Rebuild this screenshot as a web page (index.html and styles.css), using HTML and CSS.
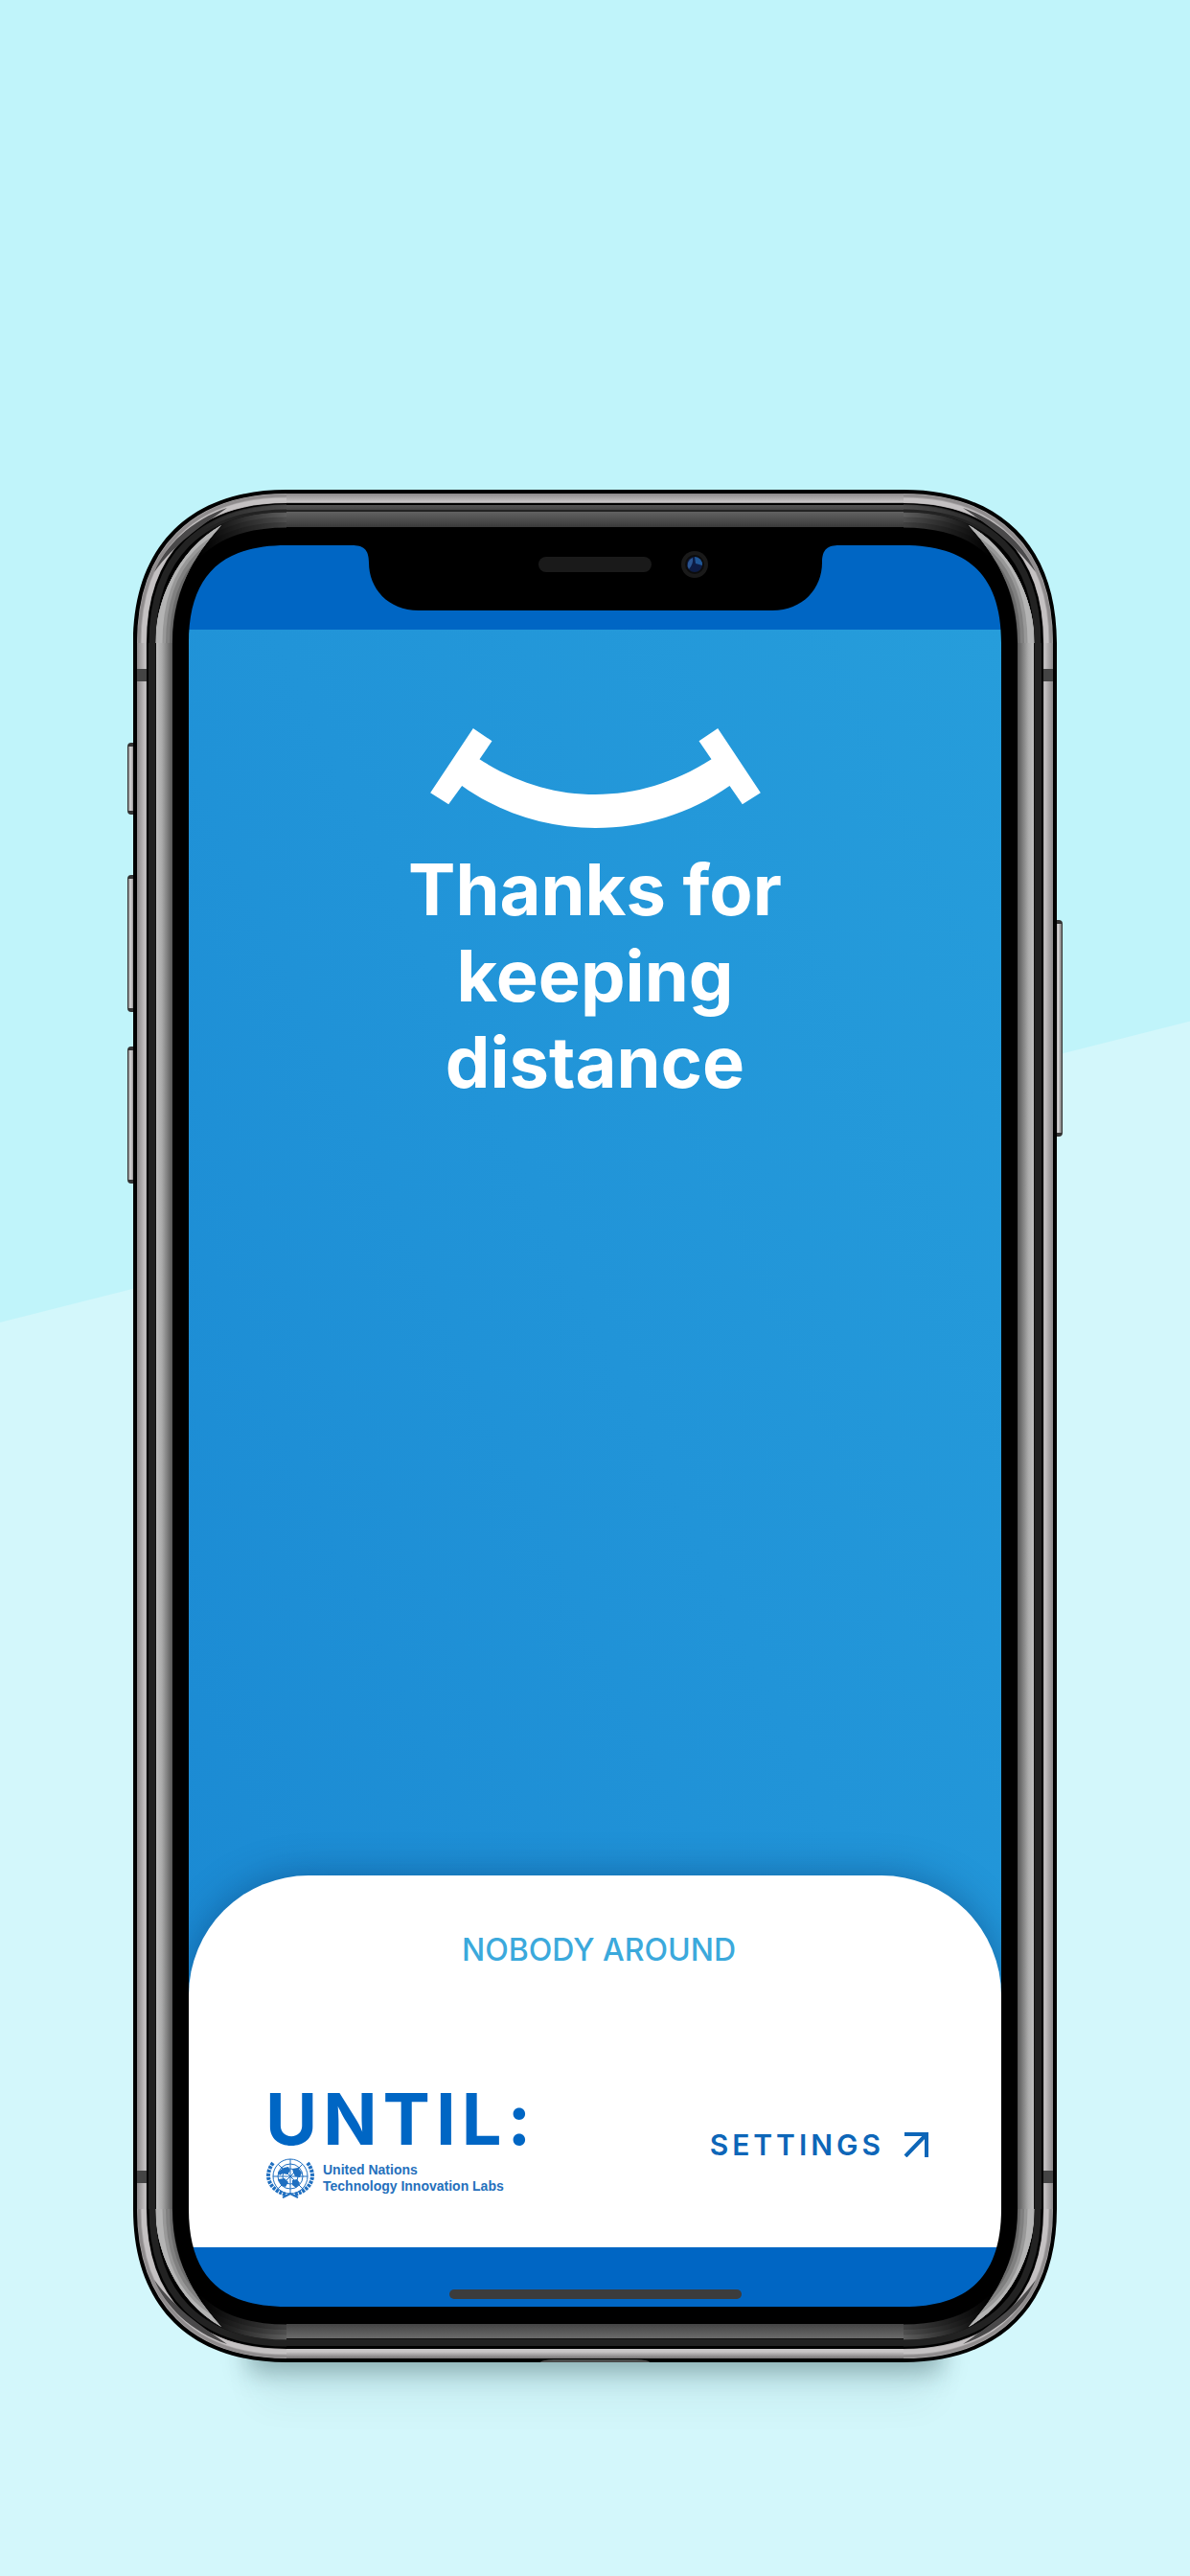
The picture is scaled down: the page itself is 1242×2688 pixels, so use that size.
FILE: index.html
```html
<!DOCTYPE html>
<html lang="en">
<head>
<meta charset="utf-8">
<meta name="viewport" content="width=device-width, initial-scale=1">
<title>UNTIL – keeping distance</title>
<link rel="stylesheet" href="styles.css">
</head>
<body>
<svg class="defs" aria-hidden="true">
  <defs>
    <linearGradient id="fade" x1="70" y1="0" x2="160" y2="0" gradientUnits="userSpaceOnUse">
      <stop offset="0" stop-color="#000"/>
      <stop offset="1" stop-color="#fff"/>
    </linearGradient>
    <mask id="fade-mask" maskUnits="userSpaceOnUse" x="0" y="0" width="160" height="160">
      <rect width="160" height="160" fill="url(#fade)"/>
    </mask>
    <clipPath id="gleam"><path d="M23 161V160C23 120 44 64 92 37C72 60 41 97 41 160V161Z"/></clipPath>
    <symbol id="corner" viewBox="0 0 160 160">
      <path d="M0 160C0 59 59 0 160 0V58C91 58 58 91 58 160Z"/>
      <g fill="none">
        <path stroke="#a8a5a6" stroke-width="10" d="M9 160C9 64 64 9 160 9"/>
        <path stroke="#8f8c8d" stroke-width="3" d="M6 160C6 63 63 6 160 6"/>
        <path stroke="#c4c1c2" stroke-width="5" d="M11 160C11 65 65 11 160 11"/>
        <path stroke="#222" stroke-width="7" d="M20 160C20 70 70 20 160 20"/>
        <g mask="url(#fade-mask)">
          <path class="rim" stroke="#4c4c4c" stroke-width="5" d="M18 160C18 69 69 18 160 18"/>
          <path stroke="#404040" stroke-width="15" d="M32 160C32 77 77 32 160 32"/>
          <path stroke="#4e4e4e" stroke-width="10" d="M29 160C29 75 75 29 160 29"/>
          <path stroke="#5e5e5e" stroke-width="5" d="M26 160C26 74 74 26 160 26"/>
        </g>
        <g clip-path="url(#gleam)">
          <path stroke="#555" stroke-width="24" d="M36 160C36 79 79 36 160 36"/>
          <path stroke="#6a6a6a" stroke-width="17" d="M32 160C32 77 77 32 160 32"/>
          <path stroke="#808080" stroke-width="14" d="M31 160C31 76 76 31 160 31"/>
          <path stroke="#989898" stroke-width="10" d="M29 160C29 75 75 29 160 29"/>
          <path stroke="#b4b4b4" stroke-width="7" d="M27 160C27 74 74 27 160 27"/>
        </g>
      </g>
      <path fill="#4a494a" d="M22 86C34 58 60 32 98 19C68 40 44 56 22 86Z"/>
    </symbol>
  </defs>
</svg>

<main class="phone">
  <div class="keys keys-left"><i class="key key-mute"></i><i class="key key-volume"></i><i class="key key-volume"></i></div>
  <div class="keys keys-right"><i class="key key-power"></i></div>

  <div class="edge-top"></div>
  <div class="edge-bottom"><i class="port"></i></div>
  <div class="edge-left"></div>
  <div class="edge-right"></div>

  <div class="screen">
    <header class="status">
      <svg class="notch" viewBox="0 0 509 68" aria-hidden="true">
        <path d="M0 0C12 0 18 4 18 18C18 45 38 68 70 68H439C471 68 491 45 491 18C491 4 497 0 509 0Z"/>
        <rect x="195" y="12" width="118" height="16" rx="8" fill="#1a1a1a"/>
        <circle cx="358" cy="20" r="14" fill="#1a1a1a"/>
        <circle cx="358" cy="20" r="10" fill="#0c0c0c"/>
        <circle cx="358" cy="20" r="8" fill="#0d1c44"/>
        <path d="M358 12a8 8 0 0 1 8 9l-7-2z" fill="#1f5797"/>
        <path d="M356 13a8 8 0 0 0-4 12q5-6 4-12z" fill="#2b5590"/>
      </svg>
    </header>

    <section class="hero">
      <svg class="smile" viewBox="148 90 1034 312" aria-hidden="true">
        <path d="M282 90L341 130L302 187C420 262 540 297 665 297C790 297 910 262 1028 187L989 130L1048 90L1182 292L1125 328L1085 270C960 358 815 402 665 402C515 402 370 358 247 270L205 328L148 292Z"/>
      </svg>
      <h1 class="title">Thanks for<br>keeping<br>distance</h1>
    </section>

    <section class="card">
      <p class="nearby">NOBODY AROUND</p>
      <div class="bar">
        <div class="brand">
          <div class="wordmark">UNTIL:</div>
          <div class="org">
            <svg class="emblem" viewBox="0 0 52 44" aria-hidden="true">
              <g fill="none" stroke="#1f6fc0">
                <circle cx="26" cy="20" r="18"/>
                <circle cx="26" cy="20" r="13"/>
                <circle cx="26" cy="20" r="8"/>
                <path d="M26 2V38M8 20H44M13 7L39 33M39 7L13 33"/>
                <path stroke-width="4" stroke-dasharray="3 1" d="M8 6C0 16 0 32 21 39"/>
                <path stroke-width="4" stroke-dasharray="3 1" d="M44 6C52 16 52 32 31 39"/>
                <path stroke-width="2" d="M18 42L26 38L34 42"/>
              </g>
              <path fill="#1f6fc0" d="M19 11l5-1 2 4-3 4-5-1-3 2-2-3 3-3zM28 12l6-1 4 5-2 5-5-1-2-4zM13 23l7-1 4 4-3 5-4-1zM28 24l5-1 3 4-4 5-4-3z"/>
            </svg>
            <p class="org-name">United Nations<br>Technology Innovation Labs</p>
          </div>
        </div>
        <button class="settings" type="button">SETTINGS
          <svg class="arrow" viewBox="0 0 26 26" aria-hidden="true"><path d="M1 2H24V26M24 2L2 25"/></svg>
        </button>
      </div>
    </section>

    <footer class="home"><i class="home-bar"></i></footer>
  </div>

  <svg class="corner corner-tl" aria-hidden="true"><use href="#corner"/></svg>
  <svg class="corner corner-tr" aria-hidden="true"><use href="#corner"/></svg>
  <svg class="corner corner-bl" aria-hidden="true"><use href="#corner"/></svg>
  <svg class="corner corner-br" aria-hidden="true"><use href="#corner"/></svg>
</main>
</body>
</html>
```
FILE: styles.css
```css
* { box-sizing: border-box; }

body {
  margin: 0;
  min-height: 100vh;
  display: flex;
  flex-direction: column;
  padding: 511px 133px 223px;
  background: linear-gradient(165.8deg, #c0f4fa calc(50% - 118px), #d3f7fb calc(50% - 117px));
  font-family: Inter, "Liberation Sans", sans-serif;
}

.defs { width: 0; height: 0; position: absolute; }

/* device frame: side keys in the outer columns, corners and edges inside */
.phone {
  flex: 1;
  display: grid;
  grid-template-columns: 6px 160px minmax(0, 1fr) 160px 6px;
  grid-template-rows: 160px 1fr 160px;
}

.corner { width: 160px; height: 160px; z-index: 2; }
.corner-tl { grid-area: 1 / 2; }
.corner-tr { grid-area: 1 / 4; transform: scaleX(-1); }
.corner-bl { grid-area: 3 / 2; transform: scaleY(-1); --rim: 0; }
.corner-br { grid-area: 3 / 4; transform: scale(-1); --rim: 0; }
.rim { opacity: var(--rim, 1); }

.edge-top {
  grid-area: 1 / 3;
  height: 58px;
  background: linear-gradient(#000 4px, #8c898a 4px, #c8c5c6 13px, #777 14px, #000 14px, #000 16px, #555 16px, #444 21px, #222 21px, #222 23px, #626262 23px, #3a3a3a 39px, #000 39px);
}
.edge-bottom {
  grid-area: 3 / 3;
  align-self: end;
  height: 58px;
  display: flex;
  justify-content: center;
  align-items: end;
  background: linear-gradient(to top, #000 4px, #777475 4px, #c8c5c6 11px, #c8c5c6 14px, #000 14px, #000 17px, #222 17px, #222 24px, #111 24px, #111 25px, #6a6a6a 25px, #444 40px, #000 40px);
  box-shadow: 0 -30px 24px 40px rgba(20, 50, 55, .34), 0 10px 40px 30px rgba(20, 60, 65, .06);
}
.port { width: 114px; height: 3px; border-radius: 14px 14px 0 0 / 3px 3px 0 0; background: #4a4a4a; }

.edge-left, .edge-right {
  width: 58px;
  background:
    linear-gradient(#444 0 0) 4px 27px / 10px 13px no-repeat,
    linear-gradient(#444 0 0) 4px calc(100% - 27px) / 10px 13px no-repeat,
    linear-gradient(to right, #000 4px, #8c898a 4px, #c8c5c6 13px, #999 14px, #000 14px, #000 16px, #222 16px, #222 23px, #000 24px, #c0c0c0 24px, #aaa 30px, #555 41px, #000 41px);
}
.edge-left { grid-area: 2 / 2; }
.edge-right { grid-area: 2 / 4; justify-self: end; transform: scaleX(-1); }

.keys { display: flex; flex-direction: column; }
.keys-left { grid-area: 1 / 1 / -1 / 2; padding-top: 264px; }
.keys-right { grid-area: 1 / 5 / -1 / 6; padding-top: 449px; }
.key {
  width: 8px;
  border: 1px solid #333;
  border-top-width: 4px;
  border-bottom-width: 4px;
  border-radius: 4px 0 0 4px;
  background: linear-gradient(to right, #888, #d8d6d7 40%, #777);
}
.keys-right .key { margin-left: -2px; border-radius: 0 4px 4px 0; }
.key-mute { height: 75px; margin-bottom: 63px; }
.key-volume { height: 143px; margin-bottom: 36px; }
.key-power { height: 226px; }

.screen {
  grid-area: 1 / 2 / -1 / 5;
  margin: 58px;
  display: flex;
  flex-direction: column;
  border-radius: 70px;
  overflow: hidden;
  background: #0066c4;
}

.status { height: 88px; display: flex; justify-content: center; align-items: flex-start; }
.notch { width: 509px; height: 68px; }

.hero {
  flex: 1;
  display: flex;
  flex-direction: column;
  align-items: center;
  gap: 19px;
  margin-bottom: -130px;
  padding: 103px 32px 160px;
  background: linear-gradient(65deg, #1b8ad3, #2194d8 50%, #269ddb);
}
.smile { width: 345px; height: 104px; fill: #fff; }
.title {
  margin: 0;
  color: #fff;
  font-size: 74px;
  font-weight: 700;
  line-height: 90px;
  text-align: center;
}

.card {
  position: relative;
  display: flex;
  flex-direction: column;
  gap: 128px;
  padding: 60px 72px 50px 80px;
  border-radius: 125px 125px 0 0;
  background: #fff;
  box-shadow: 0 0 40px rgba(0, 40, 90, .4);
}
.nearby { margin: 0; color: #3ba9dc; font-size: 32px; font-weight: 500; line-height: 36px; text-align: center; }
.bar { display: flex; justify-content: space-between; align-items: center; }
.brand { display: flex; flex-direction: column; gap: 10px; color: #0066c4; }
.wordmark { font-size: 74px; line-height: 60px; font-weight: 700; letter-spacing: 6px; }
.org { display: flex; align-items: center; gap: 8px; }
.emblem { width: 52px; height: 44px; }
.org-name { margin: 0; color: #2570bc; font: 700 14px/17px "Liberation Sans", sans-serif; }
.settings {
  display: flex;
  align-items: center;
  gap: 20px;
  padding: 4px;
  border: 0;
  background: none;
  color: #0d66b8;
  font: 600 30px/36px Inter, sans-serif;
  letter-spacing: 4px;
}
.arrow { width: 26px; height: 26px; fill: none; stroke: #0d66b8; stroke-width: 4; }

.home {
  position: relative;
  height: 62px;
  display: flex;
  justify-content: center;
  align-items: flex-end;
  padding-bottom: 8px;
  background: #0066c4;
}
.home-bar { width: 305px; height: 10px; border-radius: 5px; background: #3c3c3c; }
```
